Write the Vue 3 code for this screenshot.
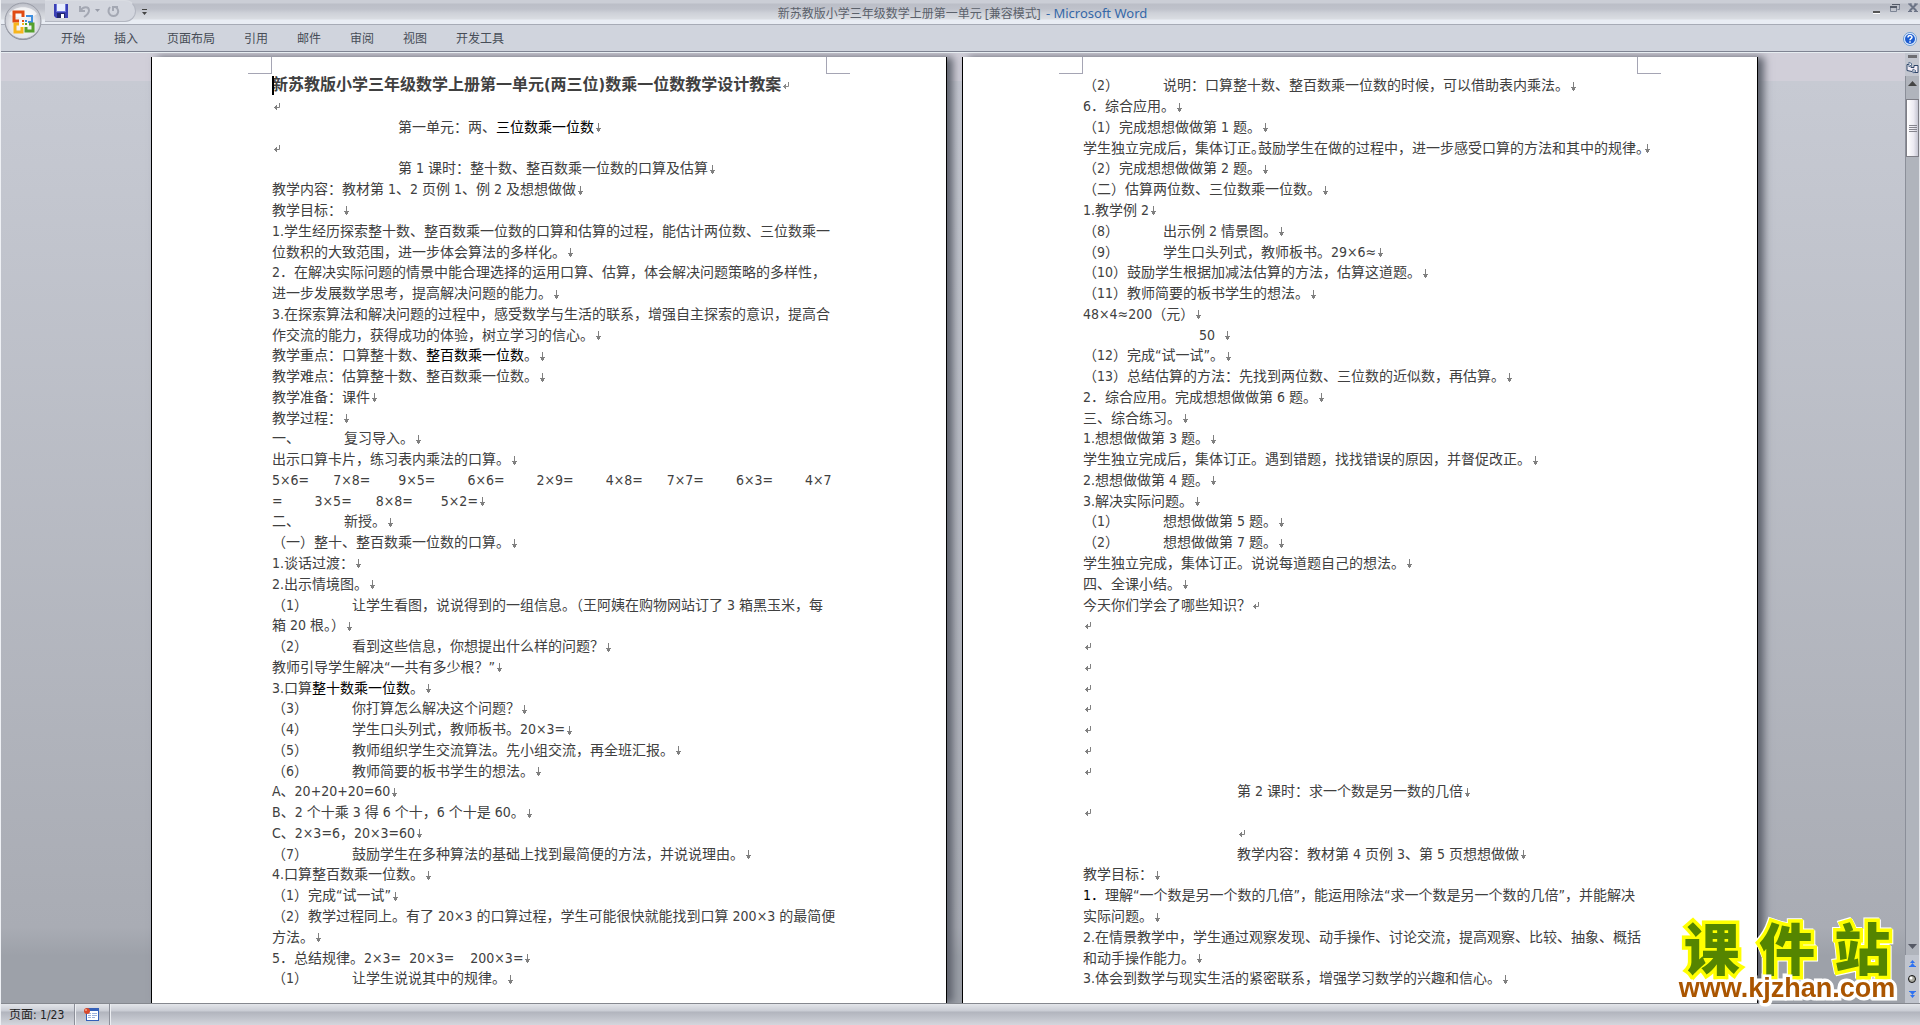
<script setup>
const tabs = ['开始', '插入', '页面布局', '引用', '邮件', '审阅', '视图', '开发工具']

// Line markup: *dark text*, _half-width punctuation_, tab = list gap.
// A trailing "|" is a line break mark and a trailing "^" a paragraph mark.
const pageOne = [
  '^',
  '　　　　　　　　　第一单元：两、*三位数乘一位数*|',
  '^',
  '　　　　　　　　　第 1 课时：整十数、整百数乘一位数的口算及估算|',
  '教学内容：教材第 1、2 页例 1、例 2 及想想做做|',
  '教学目标：|',
  '1.学生经历探索整十数、整百数乘一位数的口算和估算的过程，能估计两位数、三位数乘一',
  '位数积的大致范围，进一步体会算法的多样化。|',
  '2．在解决实际问题的情景中能合理选择的运用口算、估算，体会解决问题策略的多样性，',
  '进一步发展数学思考，提高解决问题的能力。|',
  '3.在探索算法和解决问题的过程中，感受数学与生活的联系，增强自主探索的意识，提高合',
  '作交流的能力，获得成功的体验，树立学习的信心。|',
  '教学重点：口算整十数、*整百数乘一位数*。|',
  '教学难点：估算整十数、整百数乘一位数。|',
  '教学准备：课件|',
  '教学过程：|',
  '一、\t复习导入。|',
  '出示口算卡片，练习表内乘法的口算。|',
  '5×6=      7×8=       9×5=        6×6=        2×9=        4×8=      7×7=        6×3=        4×7',
  '=        3×5=      8×8=       5×2=|',
  '二、\t新授。|',
  '（一）整十、整百数乘一位数的口算。|',
  '1.谈话过渡：|',
  '2.出示情境图。|',
  '（1）\t让学生看图，说说得到的一组信息。（王阿姨在购物网站订了 3 箱黑玉米，每',
  '箱 20 根。）|',
  '（2）\t看到这些信息，你想提出什么样的问题？|',
  '教师引导学生解决“一共有多少根？”|',
  '3.口算*整十数乘一位数*。|',
  '（3）\t你打算怎么解决这个问题？|',
  '（4）\t学生口头列式，教师板书。20×3=|',
  '（5）\t教师组织学生交流算法。先小组交流，再全班汇报。|',
  '（6）\t教师简要的板书学生的想法。|',
  'A、20+20+20=60|',
  'B、2 个十乘 3 得 6 个十，6 个十是 60。|',
  'C、2×3=6，20×3=60|',
  '（7）\t鼓励学生在多种算法的基础上找到最简便的方法，并说说理由。|',
  '4.口算整百数乘一位数。|',
  '（1）完成“试一试”|',
  '（2）教学过程同上。有了 20×3 的口算过程，学生可能很快就能找到口算 200×3 的最简便',
  '方法。|',
  '5．总结规律。2×3=  20×3=    200×3=|',
  '（1）\t让学生说说其中的规律。|',
]

const pageTwo = [
  '（2）\t说明：口算整十数、整百数乘一位数的时候，可以借助表内乘法。|',
  '6．综合应用。|',
  '（1）完成想想做做第 1 题。|',
  '学生独立完成后，集体订正_。_鼓励学生在做的过程中，进一步感受口算的方法和其中的规律_。_|',
  '（2）完成想想做做第 2 题。|',
  '（二）估算两位数、三位数乘一位数。|',
  '1.教学例 2|',
  '（8）\t出示例 2 情景图。|',
  '（9）\t学生口头列式，教师板书。29×6≈|',
  '（10）鼓励学生根据加减法估算的方法，估算这道题。|',
  '（11）教师简要的板书学生的想法。|',
  '48×4≈200（元）|',
  '　　　　　　　　 50  |',
  '（12）完成“试一试”。|',
  '（13）总结估算的方法：先找到两位数、三位数的近似数，再估算。|',
  '2．综合应用。完成想想做做第 6 题。|',
  '三、综合练习。|',
  '1.想想做做第 3 题。|',
  '学生独立完成后，集体订正。遇到错题，找找错误的原因，并督促改正。|',
  '2.想想做做第 4 题。|',
  '3.解决实际问题。|',
  '（1）\t想想做做第 5 题。|',
  '（2）\t想想做做第 7 题。|',
  '学生独立完成，集体订正。说说每道题自己的想法。|',
  '四、全课小结。|',
  '今天你们学会了哪些知识？^',
  '^', '^', '^', '^', '^', '^', '^', '^',
  '　　　　　　　　　　　第 2 课时：求一个数是另一数的几倍|',
  '^',
  '　　　　　　　　　　　^',
  '　　　　　　　　　　　教学内容：教材第 4 页例 3、第 5 页想想做做|',
  '教学目标：|',
  '*1．*理解“一个数是另一个数的几倍”，能运用除法“求一个数是另一个数的几倍”，并能解决',
  '实际问题。|',
  '2.在情景教学中，学生通过观察发现、动手操作、讨论交流，提高观察、比较、抽象、概括',
  '和动手操作能力。|',
  '3.体会到数学与现实生活的紧密联系，增强学习数学的兴趣和信心。|',
]

function parse(line) {
  const last = line.slice(-1)
  const mark = last === '|' ? 'br' : last === '^' ? 'para' : ''
  const body = mark ? line.slice(0, -1) : line
  const parts = body.split(/(\*[^*]+\*|_[^_]+_|\t)/).filter(Boolean).map((s) => {
    if (s === '\t') return { kind: 'tab', text: '' }
    if (s[0] === '*') return { kind: 'dark', text: s.slice(1, -1) }
    if (s[0] === '_') return { kind: 'half', text: s.slice(1, -1) }
    return { kind: 'plain', text: s }
  })
  return { mark, parts }
}

const pages = [
  { title: '新苏教版小学三年级数学上册第一单元(两三位)数乘一位数教学设计教案', lines: pageOne.map(parse) },
  { title: '', lines: pageTwo.map(parse) },
]
</script>

<template>
  <div class="window">
    <header class="titlebar">
      <div class="qat">
        <button class="tool save" aria-label="保存">
          <svg width="14" height="14" viewBox="0 0 14 14">
            <path d="M0 0h14v14H2l-2-2z" fill="#3a3fb4" />
            <path d="M3 0h8v7H3z" fill="#e9efff" />
            <path d="M11 0h1v8H2V0h1v7h8z" fill="#6d78dd" />
            <path d="M3 9h8v5H3z" fill="#20266e" />
            <path d="M7 10h3v4H7z" fill="#fff" />
          </svg>
        </button>
        <button class="tool undo" aria-label="撤消">
          <svg width="13" height="13" viewBox="0 0 13 13">
            <path d="M2 1v5h5M2.500 5.500C5 1 11 1 11 5.500C11 8 9 10 6 12" fill="none" stroke="#a4a8b3" stroke-width="2" />
          </svg>
        </button>
        <svg class="drop" width="5" height="4" viewBox="0 0 5 4"><path d="M0 0h5L2.500 3z" fill="#989ca8" /></svg>
        <button class="tool redo" aria-label="恢复">
          <svg width="13" height="13" viewBox="0 0 13 13">
            <path d="M3 2C0 6 2 11 6.500 11S13 5 9 2.500M6 1v5M6 2h5" fill="none" stroke="#a4a8b3" stroke-width="2" />
          </svg>
        </button>
      </div>
      <button class="tool more" aria-label="自定义快速访问工具栏">
        <svg width="5" height="6" viewBox="0 0 5 6"><path d="M0 0h5v1H0zM0 3h5L2.500 6z" fill="#444" /></svg>
      </button>
      <h2 class="caption">新苏教版小学三年级数学上册第一单元 [兼容模式] <span class="app">- Microsoft Word</span></h2>
      <div class="controls">
        <button class="tool" aria-label="最小化">
          <svg width="10" height="11" viewBox="0 0 10 11"><path d="M1 8h7v2H1z" fill="#555" /><path d="M1 10h7v1H1z" fill="#fff" /></svg>
        </button>
        <button class="tool" aria-label="还原">
          <svg width="10" height="11" viewBox="0 0 10 11">
            <path d="M2.500 1.500h7v5h-2M.500 4.500h6v4h-6z" fill="none" stroke="#7d8595" />
            <path d="M2 1h8v1H2zM0 3h7v2H0z" fill="#555b68" />
          </svg>
        </button>
        <button class="tool" aria-label="关闭">
          <svg width="10" height="11" viewBox="0 0 10 11"><path d="M1.500 1l7 7M8.500 1l-7 7" stroke="#6c7486" stroke-width="2" /><path d="M0 1h4M6 1h4M0 8.500h4M6 8.500h4" stroke="#6c7486" /></svg>
        </button>
      </div>
    </header>

    <nav class="ribbon">
      <a v-for="t in tabs" :key="t" href="#">{{ t }}</a>
      <button class="tool help" aria-label="帮助">
        <svg width="14" height="14" viewBox="0 0 14 14">
          <circle cx="7" cy="7" r="6.500" fill="#e4efff" stroke="#6b9ad0" />
          <circle cx="7" cy="7" r="5" fill="#1c5cd0" />
          <path d="M5 5.500C5 3 9 3 9 5.300C9 6.700 7 6.700 7 8.300M7 9.200v1.500" fill="none" stroke="#fff" stroke-width="1.500" />
        </svg>
      </button>
    </nav>

    <button class="orb" aria-label="Office 按钮">
      <svg width="38" height="40" viewBox="0 0 38 40">
        <defs>
          <radialGradient id="orbFill" cx="50%" cy="60%" r="60%">
            <stop offset="0" stop-color="#fff" />
            <stop offset=".6" stop-color="#e4e5ea" />
            <stop offset="1" stop-color="#b9bcc5" />
          </radialGradient>
        </defs>
        <circle cx="19" cy="20" r="18" fill="#858994" />
        <circle cx="19" cy="19" r="18" fill="url(#orbFill)" stroke="#9a9da8" />
        <path d="M5 12C10 3 28 3 33 12C26 17 12 17 5 12" fill="#fff" opacity=".7" />
        <g fill="none" stroke-width="3">
          <path d="M15 19H10V10h9v5" stroke="#e04a13" />
          <path d="M22 14h6v6h-4" stroke="#3e8fe0" stroke-width="2" />
          <path d="M15 22H11v8h7v-5" stroke="#f7b51d" />
          <path d="M25 22h4v7h-7v-4" stroke="#55a02c" />
        </g>
        <path d="M18 18h2v2h-2z" fill="#e04a13" />
        <path d="M21 18h2v2h-2z" fill="#3e8fe0" />
        <path d="M18 21h2v2h-2z" fill="#f7b51d" />
        <path d="M21 21h2v2h-2z" fill="#55a02c" />
      </svg>
    </button>

    <div class="body">
      <main class="workspace">
        <article v-for="(page, i) in pages" :key="i" class="page">
          <div class="margins"><i></i><i></i></div>
          <h1 v-if="page.title" class="line heading">
            <span class="caret"></span>{{ page.title }}<svg class="mark" width="7" height="8" viewBox="0 0 7 8"><path d="M6.500 0v4.500H1M3.500 2v5M2.500 3v3M1.500 4v1" fill="none" stroke="#8a8a8a" /></svg>
          </h1>
          <p v-for="(line, n) in page.lines" :key="n" class="line"><span v-for="(p, k) in line.parts" :key="k" :class="p.kind">{{ p.text }}</span><svg v-if="line.mark === 'br'" class="mark break" width="5" height="9" viewBox="0 0 5 9"><path d="M2.500 0v9M0 5.500h5M1 6.500h3M1 7.500h3" fill="none" stroke="#808080" /></svg><svg v-if="line.mark === 'para'" class="mark" width="7" height="8" viewBox="0 0 7 8"><path d="M6.500 0v4.500H1M3.500 2v5M2.500 3v3M1.500 4v1" fill="none" stroke="#808080" /></svg></p>
        </article>
      </main>

      <aside class="scroll">
        <div class="split"></div>
        <button class="tool ruler" aria-label="标尺">
          <svg width="13" height="12" viewBox="0 0 13 12"><path d="M1 2.500h4v3h3v-2h4v7H8l-1-2-1 1-5-1z" fill="#f3edf5" stroke="#2f4668" /><path d="M3 0l3 2-3 3zM7 7l3 2-3 2z" fill="#fff" stroke="#5a7090" /></svg>
        </button>
        <div class="track">
          <button class="tool" aria-label="向上滚动"><svg width="9" height="5" viewBox="0 0 9 5"><path d="M4.500 0L9 5H0z" fill="#444" /></svg></button>
          <div class="thumb"><i></i><i></i><i></i><i></i></div>
          <button class="tool down" aria-label="向下滚动"><svg width="9" height="5" viewBox="0 0 9 5"><path d="M0 0h9L4.500 5z" fill="#555864" /></svg></button>
        </div>
        <div class="browse">
          <button class="tool" aria-label="前一页"><svg width="7" height="7" viewBox="0 0 7 7"><path d="M3.500 0L6 3H1zM3.500 3L6 6H1zM0 6h7v1H0z" fill="#2f72f0" /></svg></button>
          <button class="tool" aria-label="选择浏览对象"><svg width="8" height="8" viewBox="0 0 8 8"><circle cx="4" cy="4" r="3.500" fill="#a9a9a0" stroke="#111" /><circle cx="3" cy="3" r="1.500" fill="#fff" /></svg></button>
          <button class="tool" aria-label="下一页"><svg width="7" height="7" viewBox="0 0 7 7"><path d="M0 0h7v1H0zM1 1h5L3.500 4zM1 4h5L3.500 7z" fill="#2f72f0" /></svg></button>
        </div>
      </aside>
    </div>

    <footer class="status">
      <button class="cell">页面: 1/23</button>
      <button class="cell icon" aria-label="宏">
        <svg width="15" height="13" viewBox="0 0 15 13">
          <path d="M2 0h13v13H2z" fill="#3460b8" />
          <path d="M3 3h11v9H3z" fill="#fff" />
          <path d="M4 5.500h3M8 5.500h5M4 7.500h3M8 7.500h5M4 9.500h3M8 9.500h3" stroke="#9cb2dd" />
          <circle cx="3" cy="3" r="3" fill="#d8492a" /><circle cx="2" cy="2" r="1" fill="#f7a68f" />
        </svg>
      </button>
    </footer>

    <div class="brand">
      <div class="name"><span>课</span><span>件</span><span>站</span></div>
      <div class="url">www.kjzhan.com</div>
    </div>
  </div>
</template>

<style>
body {
  margin: 0;
  overflow: hidden;
}
</style>

<style scoped>
.window {
  position: relative;
  display: flex;
  flex-direction: column;
  min-height: 100vh;
  box-sizing: border-box;
  border-left: 1px solid #eef0f4;
  background: #d0d4dd;
  color: #404040;
  font-family: "DejaVu Sans Condensed", "Noto Sans CJK SC", sans-serif;
}

.tool {
  display: block;
  padding: 0;
  border: 0;
  background: none;
}
.tool svg {
  display: block;
}

.titlebar {
  display: flex;
  align-items: flex-start;
  height: 24px;
  border-bottom: 1px solid #a7abb6;
  background: linear-gradient(#cbced6 0, #cbced6 3px, #bbbec7 4px, #bfc2cb 9px, #ced1d8 13px, #dadde2 19px, #e9edf4 20px, #e9edf4 24px);
}
.qat {
  display: flex;
  align-items: center;
  box-sizing: border-box;
  width: 91px;
  height: 22px;
  margin-left: 44px;
  padding-left: 9px;
  border: 1px solid #b3b7c1;
  border-left: 0;
  border-top-color: #d9dce2;
  border-radius: 0 11px 11px 0;
  background: #d3d6de;
}
.undo {
  margin-left: 10px;
}
.drop {
  margin: 0 7px 0 4px;
}
.more {
  margin: 9px 0 0 6px;
}
.caption {
  flex: 1;
  margin: 3px 0 0;
  color: #5b616b;
  font: 400 12px/20px "Noto Sans", "Noto Sans CJK SC", sans-serif;
  text-align: center;
  white-space: nowrap;
}
.app {
  margin-left: 2px;
  color: #3568a8;
  font-size: 13px;
}
.controls {
  display: flex;
  gap: 8px;
  width: 142px;
  box-sizing: border-box;
  justify-content: flex-end;
  padding: 3px 2px 0 0;
}

.ribbon {
  display: flex;
  align-items: center;
  gap: 29px;
  height: 24px;
  padding: 2px 0 0 60px;
  border-bottom: 1px solid #7f8492;
  box-shadow: 0 1px #e7edf1;
  font-size: 12px;
  line-height: 18px;
}
.ribbon a {
  color: #474d57;
  text-decoration: none;
}
.help {
  margin: 0 3px 0 auto;
}
.orb {
  position: absolute;
  top: 2px;
  left: 3px;
  padding: 0;
  border: 0;
  background: none;
}
.orb svg {
  display: block;
}

.body {
  flex: 1;
  display: flex;
  padding-top: 1px;
}
.workspace {
  flex: 1;
  display: flex;
  justify-content: center;
  gap: 15px;
  overflow: hidden;
  padding: 4px 0 0 3px;
  background: linear-gradient(#d1cfd9 0, #d1cfd9 28px, #c7cad3 28px, #a9acb4 92%, #9da1a9 95%);
}
.page {
  position: relative;
  display: flex;
  flex-direction: column;
  flex: 0 0 554px;
  min-width: 0;
  padding: 18px 120px 14px;
  border: solid #000;
  border-width: 0 1px;
  background: #fff;
  box-shadow: 6px 0 8px #5d616c;
}
.margins {
  position: absolute;
  top: 0;
  left: 96px;
  right: 96px;
  display: flex;
  justify-content: space-between;
}
.margins i {
  width: 23px;
  height: 16px;
  border: solid #a5a5b4;
  border-width: 0 1px 1px 0;
}
.margins i + i {
  border-width: 0 0 1px 1px;
}
.line {
  display: flex;
  align-items: center;
  flex: 1 0 0;
  margin: 0;
  font-size: 14px;
  font-weight: 400;
  line-height: 20px;
  white-space: pre;
}
.heading {
  position: relative;
  font-size: 16px;
  font-weight: 700;
}
.caret {
  position: absolute;
  left: 0;
  width: 2px;
  height: 19px;
  background: #000;
}
.dark {
  color: #000;
}
.half {
  font-feature-settings: "halt";
}
.tab {
  width: 44px;
}
.mark {
  flex: none;
  margin: 2px 0 0 1px;
}
.break {
  margin-left: 2px;
}

.scroll {
  display: flex;
  flex-direction: column;
  width: 14px;
  background: #c3c6cf;
  border-right: 1px solid #e3e5ea;
}
.split {
  height: 3px;
  margin: 2px 2px 2px 3px;
  background: #6d6d72;
}
.ruler {
  align-self: center;
  padding: 2px 0;
}
.track {
  flex: 1;
  display: flex;
  flex-direction: column;
  align-items: center;
  border-left: 1px solid #8b8f99;
  padding-top: 5px;
  background: #b0b4bc;
}
.thumb {
  display: flex;
  flex-direction: column;
  justify-content: center;
  align-items: center;
  gap: 1px;
  align-self: stretch;
  height: 56px;
  margin-top: 13px;
  border: 1px solid #7e7e86;
  background: linear-gradient(90deg, #fff 0, #eceaf2 60%, #c5c6d2 100%);
}
.thumb i {
  width: 8px;
  height: 1px;
  background: #85858e;
}
.down {
  margin: auto 0 6px;
}
.browse {
  display: flex;
  flex-direction: column;
  align-items: center;
  justify-content: space-between;
  height: 38px;
  padding: 5px 0;
  background: #c0c4cd;
}

.status {
  display: flex;
  height: 21px;
  border-top: 1px solid #85888f;
  background: linear-gradient(#e3e5ea 0, #c9ccd4 7px, #b1b4bd 8px, #c3c6ce 15px, #d4d6dd 21px);
}
.cell {
  box-sizing: border-box;
  width: 74px;
  padding: 0 0 0 8px;
  border: 0;
  border-right: 1px solid #8c8f99;
  box-shadow: 1px 0 #eceef2;
  background: none;
  color: #222;
  font: 12px/18px "DejaVu Sans Condensed", "Noto Sans CJK SC", sans-serif;
  text-align: left;
  white-space: nowrap;
}
.icon {
  width: 35px;
  padding-left: 9px;
}
.icon svg {
  display: block;
}

.brand {
  position: absolute;
  right: 20px;
  bottom: 23px;
  width: 226px;
  filter: drop-shadow(1px 1px #fff) drop-shadow(-1px -1px #fff);
}
.name {
  display: flex;
  justify-content: space-around;
  margin-bottom: 2px;
  color: #558500;
  font: 900 56px/52px "Noto Sans CJK SC", sans-serif;
  -webkit-text-stroke: 7px #ff0;
  paint-order: stroke fill;
}
.url {
  color: #aa5500;
  font: 700 27px/28px "Liberation Sans", sans-serif;
  text-align: center;
  -webkit-text-stroke: 5px #fff;
  paint-order: stroke fill;
}
</style>
